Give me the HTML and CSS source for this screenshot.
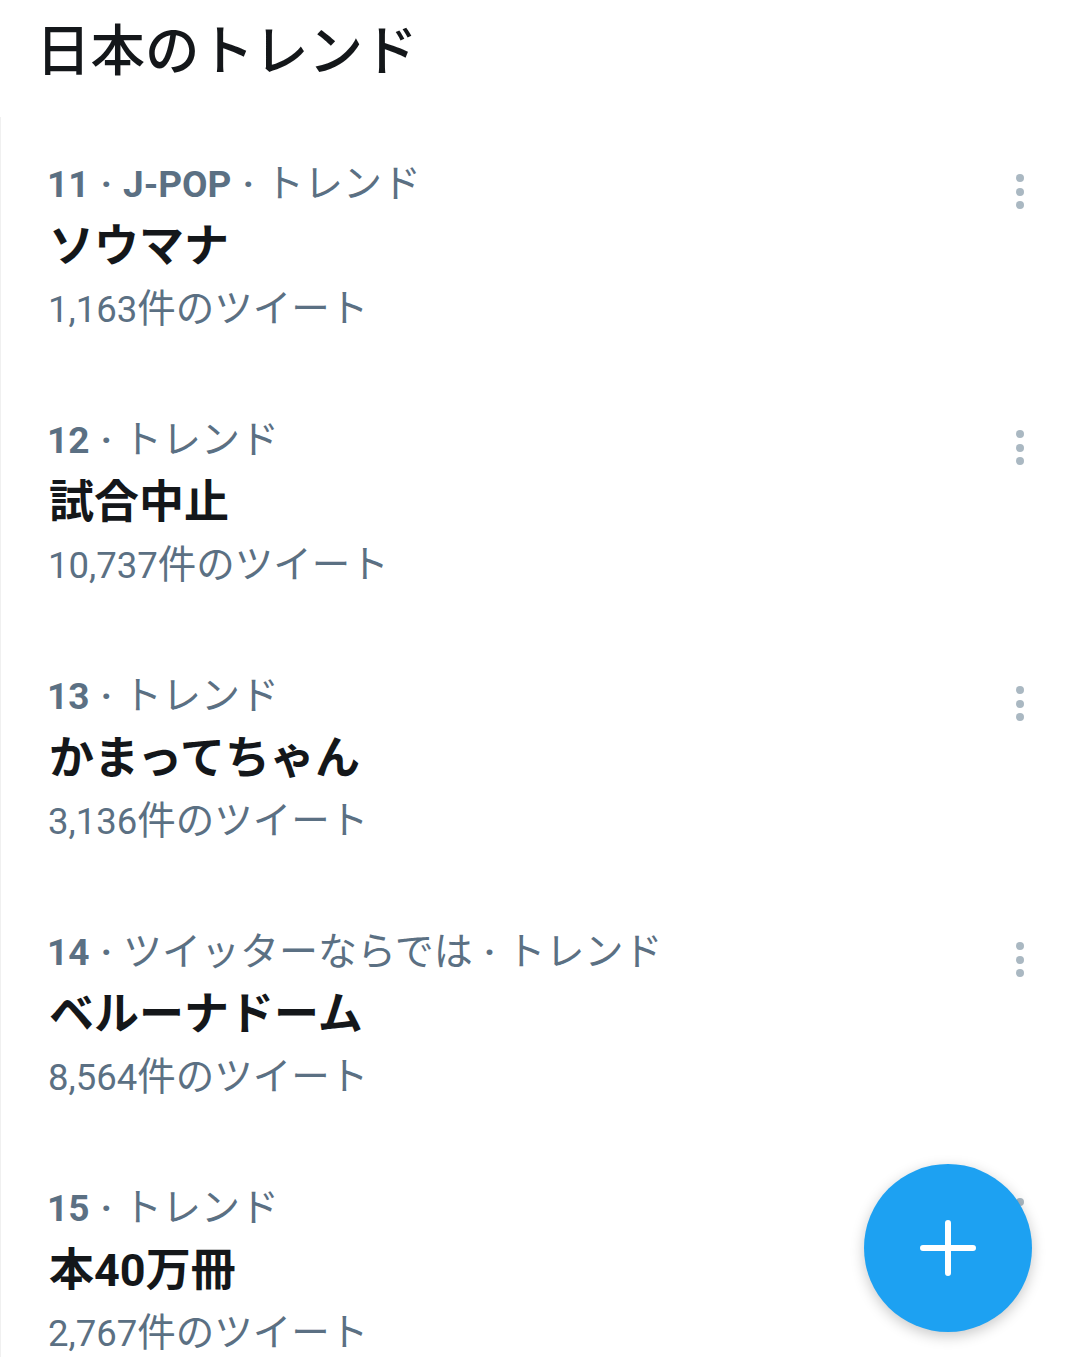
FILE: index.html
```html
<!DOCTYPE html>
<html lang="ja">
<head>
<meta charset="utf-8">
<title>日本のトレンド</title>
<link rel="stylesheet" href="styles.css">
</head>
<body>
<div class="page">
  <h1 class="heading">日本のトレンド</h1>
  <div class="list">
    <div class="trend">
      <div class="info">
        <div class="meta"><span class="b">11 · J-POP · </span>トレンド</div>
        <div class="title">ソウマナ</div>
        <div class="count"><span class="n">1,163</span>件のツイート</div>
      </div>
      <div class="more"><i></i><i></i><i></i></div>
    </div>
    <div class="trend">
      <div class="info">
        <div class="meta"><span class="b">12 · </span>トレンド</div>
        <div class="title">試合中止</div>
        <div class="count"><span class="n">10,737</span>件のツイート</div>
      </div>
      <div class="more"><i></i><i></i><i></i></div>
    </div>
    <div class="trend">
      <div class="info">
        <div class="meta"><span class="b">13 · </span>トレンド</div>
        <div class="title">かまってちゃん</div>
        <div class="count"><span class="n">3,136</span>件のツイート</div>
      </div>
      <div class="more"><i></i><i></i><i></i></div>
    </div>
    <div class="trend">
      <div class="info">
        <div class="meta"><span class="b">14 · </span>ツイッターならでは<span class="b"> · </span>トレンド</div>
        <div class="title">ベルーナドーム</div>
        <div class="count"><span class="n">8,564</span>件のツイート</div>
      </div>
      <div class="more"><i></i><i></i><i></i></div>
    </div>
    <div class="trend">
      <div class="info">
        <div class="meta"><span class="b">15 · </span>トレンド</div>
        <div class="title">本<span class="tn">40</span>万冊</div>
        <div class="count"><span class="n">2,767</span>件のツイート</div>
      </div>
      <div class="more"><i></i><i></i><i></i></div>
    </div>
  </div>
  <button class="fab" aria-label="ツイートする">
    <svg width="56" height="56" viewBox="0 0 56 56"><path d="M28 3 V53 M3 28 H53" stroke="#fff" stroke-width="6" stroke-linecap="round" fill="none"/></svg>
  </button>
</div>
</body>
</html>
```

FILE: styles.css
```css
html, body {
  margin: 0;
  padding: 0;
  background: #fff;
  overflow: hidden;
}
body {
  font-family: Roboto, "Noto Sans CJK JP", sans-serif;
  color: #14171a;
}
.page {
  position: relative;
  width: 1080px;
  height: 1357px;
  overflow: hidden;
}
.heading {
  margin: 0;
  height: 117px;
  box-sizing: border-box;
  padding: 13px 0 0 36px;
  font-family: "Noto Sans CJK JP", sans-serif;
  font-size: 54.5px;
  font-weight: 500;
  line-height: 68px;
  color: #14171a;
}
.list {
  border-left: 1px solid #f0f0f0;
}
.trend {
  display: flex;
  justify-content: space-between;
  align-items: flex-start;
  height: 256px;
  box-sizing: border-box;
  padding: 32px 0 0 48px;
}
.meta,
.title,
.count {
  overflow: visible;
  white-space: nowrap;
}
.meta {
  height: 62px;
  margin-left: -2px;
  font-family: "Noto Sans CJK JP", sans-serif;
  font-size: 39px;
  line-height: 62px;
  color: #5b7083;
  font-weight: 400;
}
.meta .b {
  font-family: Roboto, sans-serif;
  font-size: 37px;
  font-weight: 700;
  word-spacing: 2px;
  line-height: 1;
}
.title {
  height: 63px;
  font-family: "Noto Sans CJK JP", sans-serif;
  font-size: 45px;
  font-weight: 700;
  line-height: 63px;
  color: #14171a;
}
.title .tn {
  font-family: Roboto, sans-serif;
  font-size: 45px;
  line-height: 1;
}
.count {
  height: 62px;
  margin-left: -1px;
  font-family: "Noto Sans CJK JP", sans-serif;
  font-size: 38.5px;
  line-height: 62px;
  color: #5b7083;
}
.count .n {
  font-family: Roboto, sans-serif;
  font-size: 36.5px;
  line-height: 1;
}
.more {
  display: flex;
  flex-direction: column;
  gap: 5.5px;
  margin: 25px 56px 0 0;
}
.more i {
  display: block;
  width: 8px;
  height: 8px;
  border-radius: 50%;
  background: #aab8c2;
}
.fab {
  position: absolute;
  left: 864px;
  top: 1164px;
  width: 168px;
  height: 168px;
  border-radius: 50%;
  border: none;
  padding: 0;
  background: #1da1f2;
  box-shadow: 0 4px 14px rgba(0, 0, 0, 0.22);
  display: flex;
  align-items: center;
  justify-content: center;
}
```
